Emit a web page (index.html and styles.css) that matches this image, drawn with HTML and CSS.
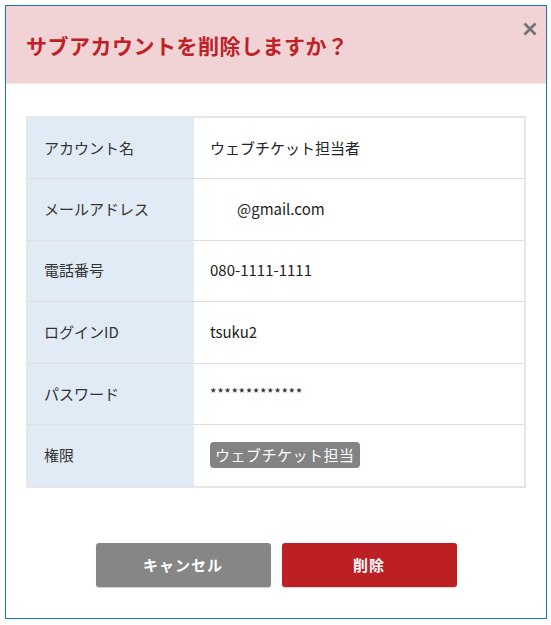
FILE: index.html
```html
<!DOCTYPE html>
<html lang="ja">
<head>
<meta charset="utf-8">
<title>サブアカウント削除</title>
<link rel="stylesheet" href="styles.css">
</head>
<body>
<div class="dialog">
  <div class="dialog-header">
    <h1 class="dialog-title">サブアカウントを削除しますか？</h1>
    <button class="close-btn" aria-label="閉じる">
      <svg width="14" height="14" viewBox="0 0 14 14"><path d="M1.5 1.5 L12.5 12.5 M12.5 1.5 L1.5 12.5" stroke="#737373" stroke-width="2.8" fill="none"/></svg>
    </button>
  </div>
  <div class="dialog-body">
    <table class="info-table">
      <tr><th>アカウント名</th><td>ウェブチケット担当者</td></tr>
      <tr><th>メールアドレス</th><td><span class="masked"></span>@gmail.com</td></tr>
      <tr><th>電話番号</th><td>080-1111-1111</td></tr>
      <tr><th>ログインID</th><td>tsuku2</td></tr>
      <tr><th>パスワード</th><td class="pw">*************</td></tr>
      <tr><th>権限</th><td><span class="badge">ウェブチケット担当</span></td></tr>
    </table>
    <div class="actions">
      <button class="btn btn-cancel">キャンセル</button>
      <button class="btn btn-delete">削除</button>
    </div>
  </div>
</div>
</body>
</html>
```
FILE: styles.css
```css
* { box-sizing: border-box; }
html, body { margin: 0; padding: 0; background: #fff; }
body {
  padding: 5px 4px 6px 5px;
  font-family: "Noto Sans CJK JP", "Noto Sans", sans-serif;
  color: #222;
}
.dialog {
  width: 542px;
  height: 614px;
  border: 1px solid #1279c9;
  background: #fff;
  display: flex;
  flex-direction: column;
}
.dialog-header {
  position: relative;
  height: 78px;
  background: #f2d3d5;
  border-bottom: 1px solid #ececec;
  display: flex;
  align-items: center;
  padding-left: 20px;
}
.dialog-title {
  margin: 0;
  font-size: 21px;
  font-weight: 700;
  letter-spacing: 0.5px;
  color: #be2127;
  line-height: 1;
  padding-top: 2px;
}
.close-btn {
  position: absolute;
  top: 16px;
  right: 9px;
  width: 14px;
  height: 14px;
  padding: 0;
  border: 0;
  background: transparent;
  display: flex;
}
.dialog-body {
  padding: 32px 20px 0 20px;
}
.info-table {
  width: 500px;
  border-collapse: collapse;
  border: 2px solid #e6e6e6;
}
.info-table th,
.info-table td {
  height: 61.6px;
  border-top: 1px solid #dedede;
  font-size: 15px;
  font-weight: 400;
  text-align: left;
  vertical-align: middle;
  padding: 0 0 2px 0;
}
.info-table tr:first-child th,
.info-table tr:first-child td { border-top: 0; }
.info-table th {
  width: 167px;
  background: #e1ebf5;
  padding-left: 16px;
  color: #333;
}
.info-table td {
  padding-left: 16px;
  color: #222;
}
.masked { display: inline-block; width: 27px; }
.info-table td.pw { font-size: 14px; letter-spacing: 0.6px; }
.badge {
  display: inline-block;
  background: #838383;
  color: #fff;
  font-size: 15px;
  line-height: 26px;
  height: 26px;
  padding: 0 5px;
  border-radius: 4px;
  letter-spacing: 0.5px;
}
.actions {
  display: flex;
  justify-content: center;
  gap: 11px;
  margin-top: 55px;
}
.btn {
  width: 175px;
  height: 44px;
  border: 0;
  border-radius: 3px;
  color: #fff;
  font-family: "Noto Sans CJK JP", "Noto Sans", sans-serif;
  font-size: 15px;
  font-weight: 700;
  letter-spacing: 1px;
  box-shadow: 0 1px 1px rgba(0,0,0,0.2);
}
.btn-cancel { background: #868686; }
.btn-delete { background: #bc2023; }
```
